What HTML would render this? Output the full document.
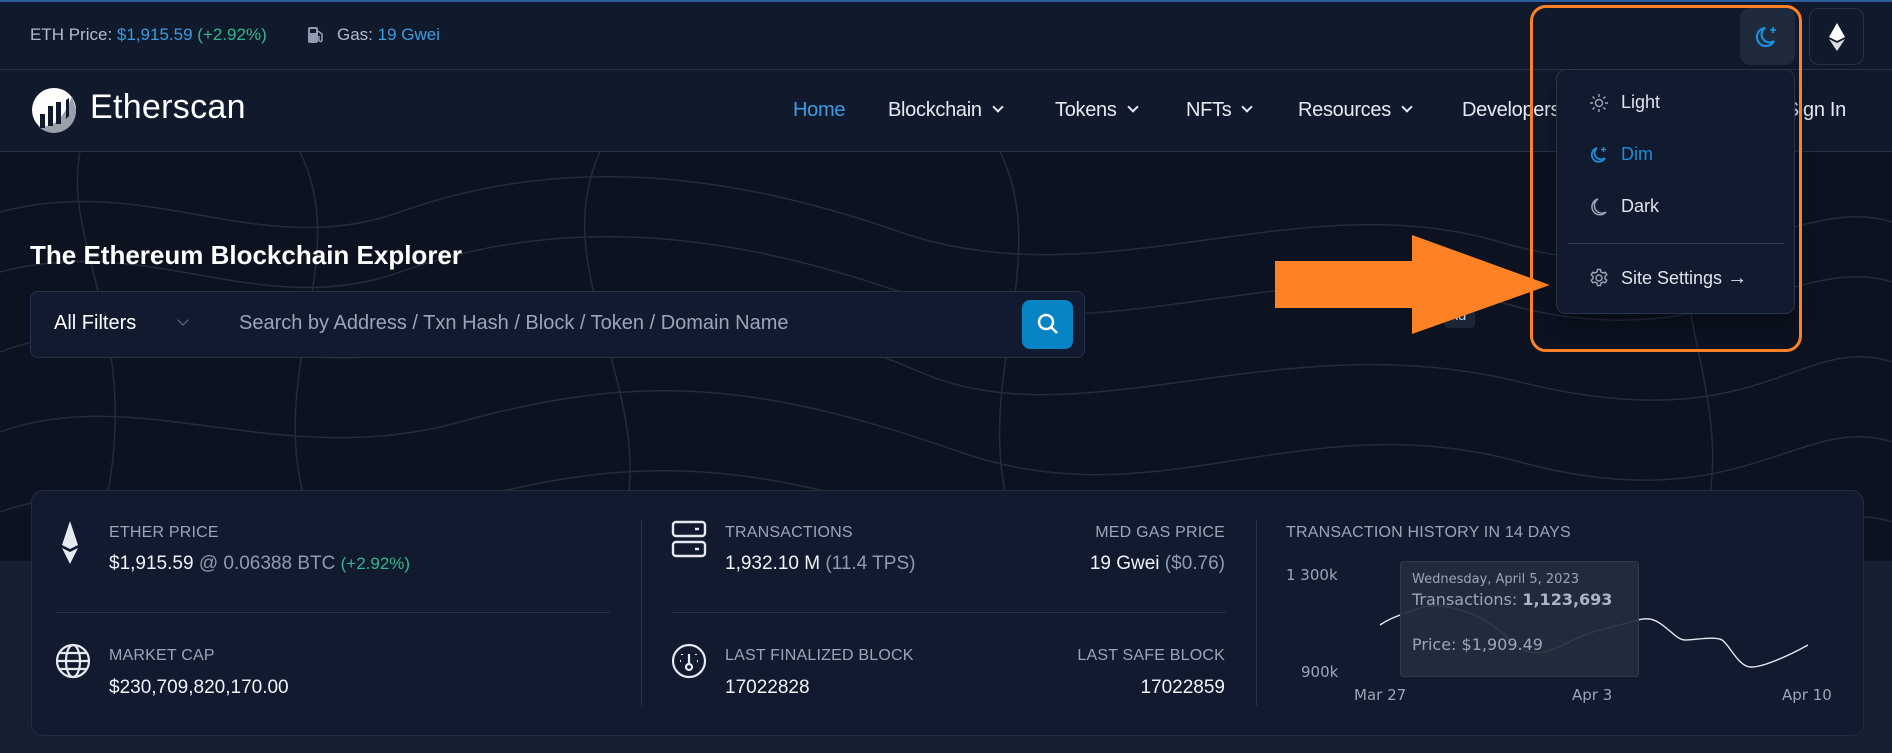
<!DOCTYPE html>
<html><head><meta charset="utf-8"><style>
*{box-sizing:border-box;margin:0;padding:0}
body{width:1892px;height:753px;overflow:hidden;background:#172033;font-family:"Liberation Sans",sans-serif;position:relative;color:#fff}
.abs{position:absolute;white-space:nowrap}
#top{position:absolute;left:0;top:0;width:1892px;height:70px;background:#111a2c;border-top:2px solid #2c5d9c;border-bottom:1px solid #26314a}
#nav{position:absolute;left:0;top:70px;width:1892px;height:82px;background:#111a2c;border-bottom:1px solid #26314a}
#hero{position:absolute;left:0;top:152px;width:1892px;height:409px;background:#0c1220;overflow:hidden}
.nv{font-size:20px;color:#e6e9ef;top:99px;letter-spacing:-.3px}
.chev{display:inline-block;width:8px;height:8px;border-right:2px solid #e6e9ef;border-bottom:2px solid #e6e9ef;transform:rotate(45deg);margin-left:12px;position:relative;top:-5px}
#card{position:absolute;left:31px;top:490px;width:1833px;height:246px;background:#111a2e;border:1px solid #222d42;border-radius:12px}
.lbl{font-size:16px;color:#9aa6b8;letter-spacing:.2px}
.val{font-size:19px;color:#f1f3f6}
.mut{color:#8e9bb0}
.g{color:#2fb88a}
.hr{position:absolute;height:1px;background:#28334a}
.vr{position:absolute;width:1px;background:#28334a}
.dd{font-size:18px;color:#dfe3ea}
</style></head><body>
<div id="top">
 <div class="abs" style="left:30px;top:23px;font-size:17px;color:#b3bccb">ETH Price: <span style="color:#3d9be0">$1,915.59</span> <span class="g">(+2.92%)</span></div>
 <svg class="abs" style="left:307px;top:23px" width="18" height="20" viewBox="0 0 18 20"><rect x="1" y="2" width="10" height="16" rx="2" fill="#8e9bb0"/><rect x="3" y="4" width="6" height="4" fill="#111a2c"/><path d="M11 6 L15 9 V15 a1.5 1.5 0 0 1 -3 0 V11" stroke="#8e9bb0" stroke-width="1.6" fill="none"/></svg>
 <div class="abs" style="left:337px;top:23px;font-size:17px;color:#b3bccb">Gas: <span style="color:#3d9be0">19 Gwei</span></div>
 <div class="abs" style="left:1740px;top:6px;width:55px;height:57px;background:#1f2a3d;border-radius:10px"></div>
 <svg class="abs" style="left:1754px;top:22px" width="26" height="26" viewBox="0 0 26 26"><path d="M11 4 A9 9 0 1 0 20 17 A7 7 0 0 1 11 4Z" fill="none" stroke="#1b8fd8" stroke-width="2.2"/><path d="M19 3v6M16 6h6" stroke="#1b8fd8" stroke-width="1.8"/></svg>
 <div class="abs" style="left:1809px;top:6px;width:55px;height:57px;border:1px solid #26314a;border-radius:10px"></div>
 <svg class="abs" style="left:1827px;top:20px" width="20" height="30" viewBox="0 0 20 30"><path d="M10 1 L18 15 L10 19 L2 15Z" fill="#fff"/><path d="M10 21 L18 17 L10 29 L2 17Z" fill="#ddd"/></svg>
</div>
<div id="nav"></div>
<svg class="abs" style="left:30px;top:86px" width="50" height="50" viewBox="0 0 50 50"><circle cx="24" cy="24" r="22" fill="#fff"/><path d="M46 24 A22 22 0 0 1 8 40 Q30 44 42 10 Z" fill="#9aa0a8"/><rect x="10" y="28" width="5" height="14" fill="#111a2c"/><rect x="18" y="20" width="5" height="20" fill="#111a2c"/><rect x="26" y="16" width="5" height="22" fill="#111a2c"/><path d="M36 14 l3 -2 v18 l-3 3z" fill="#111a2c"/></svg>
<div class="abs" style="left:90px;top:88px;font-size:34px;color:#fff;letter-spacing:.3px">Etherscan</div>
<div class="abs nv" style="left:793px;color:#3d9be0">Home</div>
<div class="abs nv" style="left:888px">Blockchain<span class="chev"></span></div>
<div class="abs nv" style="left:1055px">Tokens<span class="chev"></span></div>
<div class="abs nv" style="left:1186px">NFTs<span class="chev"></span></div>
<div class="abs nv" style="left:1298px">Resources<span class="chev"></span></div>
<div class="abs nv" style="left:1462px">Developers</div>
<div class="abs nv" style="right:46px">Sign In</div>
<div id="hero">
 <svg width="1892" height="409" style="position:absolute;left:0;top:0" fill="none" stroke="#2a3242" stroke-width="1.5" opacity=".8">
  <path d="M0 60 C150 20 260 110 400 60 S700 10 900 80 S1300 30 1500 90 S1800 40 1892 70"/>
  <path d="M0 120 C150 80 260 170 400 120 S700 70 900 140 S1300 90 1500 150 S1800 100 1892 130"/>
  <path d="M0 200 C120 150 300 240 450 190 S760 150 920 220 S1280 170 1520 230 S1800 180 1892 210"/>
  <path d="M0 280 C140 230 280 320 460 270 S760 230 960 300 S1300 250 1520 310 S1800 260 1892 290"/>
  <path d="M0 360 C140 310 280 400 460 350 S760 310 960 380 S1300 330 1520 390 S1800 340 1892 370"/>
  <path d="M80 0 C60 100 160 200 90 409"/><path d="M300 0 C360 120 240 250 330 409"/><path d="M600 0 C540 130 680 260 610 409"/><path d="M1000 0 C1060 120 950 260 1030 409"/><path d="M1700 0 C1640 140 1760 260 1690 409"/>
 </svg>
</div>
<div class="abs" style="left:30px;top:240px;font-size:26px;font-weight:bold;color:#fff">The Ethereum Blockchain Explorer</div>
<div class="abs" style="left:30px;top:291px;width:1055px;height:67px;background:#111a2e;border:1px solid #26314a;border-radius:8px"></div>
<div class="abs" style="left:54px;top:312px;font-size:20px;color:#fff">All Filters</div>
<div class="abs" style="left:179px;top:316px;width:8px;height:8px;border-right:1.5px solid #6b7689;border-bottom:1.5px solid #6b7689;transform:rotate(45deg)"></div>
<div class="abs" style="left:239px;top:312px;font-size:20px;color:#9aa6b8">Search by Address / Txn Hash / Block / Token / Domain Name</div>
<div class="abs" style="left:1022px;top:300px;width:51px;height:49px;background:#0784c3;border-radius:8px"></div>
<svg class="abs" style="left:1036px;top:312px" width="24" height="24" viewBox="0 0 24 24"><circle cx="10" cy="10" r="7" stroke="#fff" stroke-width="2.5" fill="none"/><path d="M15 15l6 6" stroke="#fff" stroke-width="2.5"/></svg>
<div class="abs" style="left:1444px;top:304px;width:31px;height:24px;background:#1c2535;border-radius:4px;font-size:15px;color:#ccd;padding:3px 4px">Ad</div>
<svg class="abs" style="left:1270px;top:230px" width="290" height="110" viewBox="0 0 290 110"><path d="M5 31 H142 V5 L280 55 L142 104 V78 H5Z" fill="#ff8125"/></svg>
<div class="abs" style="left:1556px;top:69px;width:239px;height:245px;background:#111a2e;border:1px solid #2a3548;border-radius:10px;box-shadow:0 8px 20px rgba(0,0,0,.4)"></div>
<svg class="abs" style="left:1589px;top:93px" width="20" height="20" viewBox="0 0 20 20" stroke="#9aa6b8" stroke-width="1.4" fill="none"><circle cx="10" cy="10" r="3.5"/><path d="M10 1v3M10 16v3M1 10h3M16 10h3M3.6 3.6l2 2M14.4 14.4l2 2M3.6 16.4l2-2M14.4 5.6l2-2"/></svg>
<div class="abs dd" style="left:1621px;top:92px">Light</div>
<svg class="abs" style="left:1589px;top:145px" width="20" height="20" viewBox="0 0 20 20"><path d="M8 3 A7 7 0 1 0 16 13 A5.5 5.5 0 0 1 8 3Z" fill="none" stroke="#1b8fd8" stroke-width="1.8"/><path d="M14.5 2v5M12 4.5h5" stroke="#1b8fd8" stroke-width="1.5"/></svg>
<div class="abs dd" style="left:1621px;top:144px;color:#1b8fd8">Dim</div>
<svg class="abs" style="left:1589px;top:197px" width="20" height="20" viewBox="0 0 20 20"><path d="M9 2 A8 8 0 1 0 17 15 A7 7 0 0 1 9 2Z" fill="none" stroke="#9aa6b8" stroke-width="1.5"/></svg>
<div class="abs dd" style="left:1621px;top:196px">Dark</div>
<div class="abs" style="left:1568px;top:243px;width:216px;height:1px;background:#2c3750"></div>
<svg class="abs" style="left:1589px;top:268px" width="20" height="20" viewBox="0 0 20 20" stroke="#9aa6b8" stroke-width="1.4" fill="none"><circle cx="10" cy="10" r="3"/><path d="M8.5 1.5h3l.5 2.4 2 1.1 2.3-.8 1.5 2.6-1.8 1.6v2.2l1.8 1.6-1.5 2.6-2.3-.8-2 1.1-.5 2.4h-3l-.5-2.4-2-1.1-2.3.8-1.5-2.6 1.8-1.6V8.4L2.2 6.8l1.5-2.6 2.3.8 2-1.1z"/></svg>
<div class="abs dd" style="left:1621px;top:267px">Site Settings <span style="font-size:20px">→</span></div>
<div class="abs" style="left:1530px;top:5px;width:272px;height:347px;border:3px solid #ff8125;border-radius:16px"></div>
<div id="card"></div>
<div class="vr" style="left:641px;top:520px;height:186px"></div>
<div class="vr" style="left:1256px;top:520px;height:186px"></div>
<div class="hr" style="left:55px;top:612px;width:555px"></div>
<div class="hr" style="left:671px;top:612px;width:555px"></div>
<svg class="abs" style="left:60px;top:520px" width="20" height="45" viewBox="0 0 20 45"><path d="M10 1 L18 25 L10 29 L2 25Z" fill="#e6e9ef"/><path d="M10 32 L18 28 L10 44 L2 28Z" fill="#e6e9ef"/></svg>
<div class="abs lbl" style="left:109px;top:524px">ETHER PRICE</div>
<div class="abs val" style="left:109px;top:553px">$1,915.59 <span class="mut">@ 0.06388 BTC</span> <span class="g" style="font-size:17px">(+2.92%)</span></div>
<svg class="abs" style="left:54px;top:642px" width="38" height="38" viewBox="0 0 38 38" fill="none" stroke="#e6e9ef" stroke-width="2.2"><circle cx="19" cy="19" r="16"/><ellipse cx="19" cy="19" rx="7" ry="16"/><path d="M3 19h32M6 11h26M6 27h26"/></svg>
<div class="abs lbl" style="left:109px;top:647px">MARKET CAP</div>
<div class="abs val" style="left:109px;top:677px">$230,709,820,170.00</div>
<svg class="abs" style="left:671px;top:520px" width="36" height="40" viewBox="0 0 36 40" fill="none" stroke="#e6e9ef" stroke-width="2.4"><rect x="2" y="2" width="32" height="14" rx="3"/><rect x="2" y="22" width="32" height="14" rx="3"/><path d="M24 9h4M24 29h4"/></svg>
<div class="abs lbl" style="left:725px;top:524px">TRANSACTIONS</div>
<div class="abs val" style="left:725px;top:553px">1,932.10 M <span class="mut">(11.4 TPS)</span></div>
<div class="abs lbl" style="right:667px;top:524px">MED GAS PRICE</div>
<div class="abs val" style="right:667px;top:553px">19 Gwei <span class="mut">($0.76)</span></div>
<svg class="abs" style="left:671px;top:642px" width="36" height="38" viewBox="0 0 36 38" fill="none" stroke="#e6e9ef" stroke-width="2.2"><circle cx="18" cy="19" r="16"/><circle cx="18" cy="25" r="3"/><path d="M18 22V12M11 12v1M25 12v1M9 19h1M26 19h1"/></svg>
<div class="abs lbl" style="left:725px;top:647px">LAST FINALIZED BLOCK</div>
<div class="abs val" style="left:725px;top:677px">17022828</div>
<div class="abs lbl" style="right:667px;top:647px">LAST SAFE BLOCK</div>
<div class="abs val" style="right:667px;top:677px">17022859</div>
<div class="abs lbl" style="left:1286px;top:524px">TRANSACTION HISTORY IN 14 DAYS</div>
<div class="abs" style="left:1286px;top:566px;font-size:15px;color:#9aa6b8;font-family:'DejaVu Sans',sans-serif">1 300k</div>
<div class="abs" style="left:1301px;top:663px;font-size:15px;color:#9aa6b8;font-family:'DejaVu Sans',sans-serif">900k</div>
<div class="abs" style="left:1354px;top:686px;font-size:15px;color:#9aa6b8;font-family:'DejaVu Sans',sans-serif">Mar 27</div>
<div class="abs" style="left:1572px;top:686px;font-size:15px;color:#9aa6b8;font-family:'DejaVu Sans',sans-serif">Apr 3</div>
<div class="abs" style="left:1782px;top:686px;font-size:15px;color:#9aa6b8;font-family:'DejaVu Sans',sans-serif">Apr 10</div>
<svg class="abs" style="left:0;top:0" width="1892" height="753" fill="none" stroke="#e6e9ef" stroke-width="1.4"><path d="M1380 625 C1390 618 1400 615 1420 608 S1480 610 1510 640 S1560 640 1600 630 S1640 618 1650 619 C1665 622 1675 640 1685 640 S1715 636 1722 640 S1738 666 1750 667 S1790 655 1808 645"/></svg>
<div class="abs" style="left:1400px;top:561px;width:239px;height:116px;background:rgba(35,45,60,.93);border:1px solid #2e3a4e;border-radius:3px;font-family:'DejaVu Sans',sans-serif;color:#9aa6b8;padding:10px 11px">
 <div style="font-size:13px">Wednesday, April 5, 2023</div>
 <div style="font-size:16px;margin-top:3px">Transactions: <b style="color:#aab6c8">1,123,693</b></div>
 <div style="font-size:16px;margin-top:26px">Price: $1,909.49</div>
</div>
</body></html>
